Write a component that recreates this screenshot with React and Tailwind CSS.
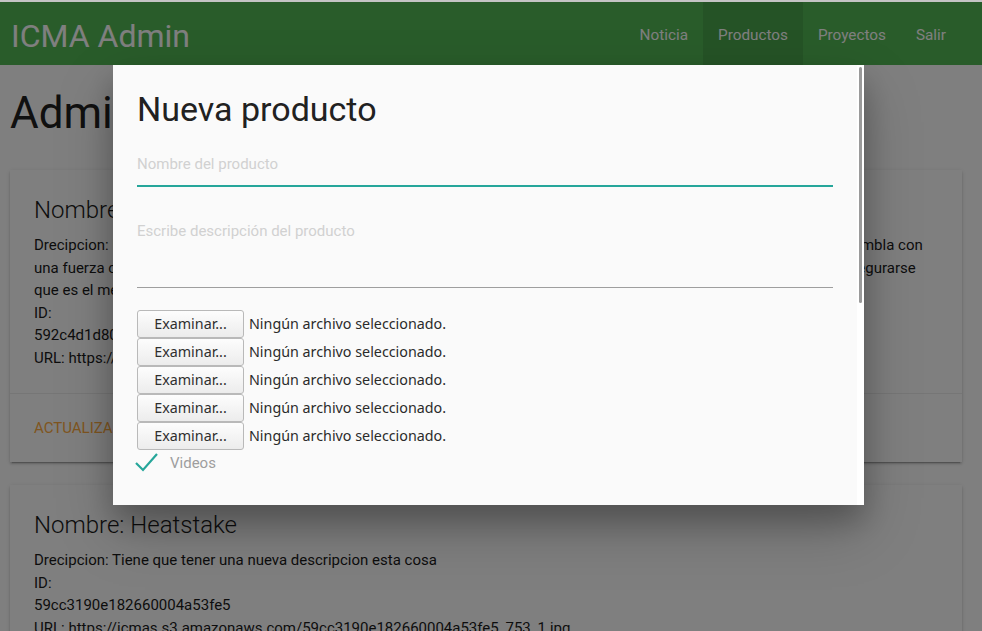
import { useState } from "react";

const productos = [
  {
    id: "592c4d1d8012345a0004b1c2",
    nombre: "Nombre: Heatstake Manual",
    lineas: [
      "Drecipcion: Máquina de inserción por calor que permite colocar insertos metálicos en piezas de plástico y que luego se ensambla con",
      "una fuerza constante y controlada, la temperatura se mantiene estable durante todo el proceso de trabajo del operador al asegurarse",
      "que es el mejor resultado posible en cada pieza.",
    ],
  },
  {
    id: "59cc3190e182660004a53fe5",
    nombre: "Nombre: Heatstake",
    lineas: ["Drecipcion: Tiene que tener una nueva descripcion esta cosa"],
  },
];

function Checkmark() {
  return (
    <svg width="24" height="20" viewBox="0 0 24 20" className="shrink-0">
      <polyline points="1,10 8,17 22,1" fill="none" stroke="#26a69a" strokeWidth="2.2" />
    </svg>
  );
}

function FileRow() {
  return (
    <div className="flex h-[28px] items-center font-['Noto_Sans',sans-serif] text-[14.3px]">
      <button className="h-[28px] w-[107px] rounded-[3px] border border-[#b9b9b9] bg-gradient-to-b from-[#fdfdfd] to-[#ececec] text-[#2f2f2f]">
        Examinar...
      </button>
      <span className="ml-[5px] text-[#2b2b2b]">Ningún archivo seleccionado.</span>
    </div>
  );
}

export default function App() {
  const [videos, setVideos] = useState(true);

  return (
    <div className="relative min-h-screen w-full bg-white font-['Roboto',sans-serif]">
      <div className="relative z-50 h-[2px] bg-[#c4c4c4]" />
      <nav className="flex h-[63px] items-center justify-between bg-[#53b955] pl-[11px] pr-[21px]">
        <span className="pt-[4px] text-[32px] leading-none text-white">ICMA Admin</span>
        <ul className="flex h-full pt-[3px] text-[15.3px] text-white">
          <li className="flex items-center px-[15px]">Noticia</li>
          <li className="-mt-[3px] flex items-center bg-black/10 px-[15px] pt-[3px]">Productos</li>
          <li className="flex items-center px-[15px]">Proyectos</li>
          <li className="flex items-center px-[15px]">Salir</li>
        </ul>
      </nav>

      <div className="ml-[10px] mr-[20px]">
        <h3 className="mt-[24px] mb-[33px] text-[44px] leading-[48px] text-[#212121]">Administrar Productos</h3>

        {productos.map((p) => (
          <div
            key={p.id}
            className="mb-[23px] bg-white shadow-[0_2px_2px_0_rgba(0,0,0,0.14),0_1px_5px_0_rgba(0,0,0,0.12),0_3px_1px_-2px_rgba(0,0,0,0.2)]"
          >
            <div className="p-[24px] text-[15px] leading-[22.5px] text-[#1a1a1a]">
              <p className="mb-[8px] text-[24px] font-light leading-[32px]">{p.nombre}</p>
              {p.lineas.map((l) => (
                <p key={l} className="whitespace-nowrap">{l}</p>
              ))}
              <p>ID:</p>
              <p>{p.id}</p>
              <p>URL: https://icmas.s3.amazonaws.com/{p.id}_753_1.jpg</p>
            </div>
            <div className="flex gap-[24px] border-t border-[rgba(160,160,160,0.2)] px-[24px] py-[23px] text-[15px] leading-[22px] text-[#ffab40]">
              <span>ACTUALIZAR</span>
              <span>ELIMINAR</span>
            </div>
          </div>
        ))}
      </div>

      <div className="fixed inset-0 z-40 bg-black/50" />

      <div className="fixed left-[113px] top-[65px] z-50 h-[440px] w-[751px] overflow-hidden bg-white shadow-[0_16px_28px_0_rgba(0,0,0,0.22),0_25px_55px_0_rgba(0,0,0,0.21)]">
        <div className="h-full w-[744px] bg-[#fafafa] px-[24px] pt-[25px]">
          <h4 className="text-[34px] leading-[38px] text-[#212121]">Nueva producto</h4>

          <div className="mt-[13px]">
            <input
              placeholder="Nombre del producto"
              className="h-[46px] w-full border-b-2 border-[#26a69a] bg-transparent pt-[2px] text-[15px] text-[#212121] outline-none placeholder:text-[#d1d1d1]"
            />
          </div>

          <div className="mt-[22px]">
            <textarea
              placeholder="Escribe descripción del producto"
              className="block h-[79px] w-full resize-none border-b border-[#9e9e9e] bg-transparent pt-[11px] text-[15px] leading-[22px] text-[#212121] outline-none placeholder:text-[#d1d1d1]"
            />
          </div>

          <div className="mt-[22px] flex flex-col">
            <FileRow />
            <FileRow />
            <FileRow />
            <FileRow />
            <FileRow />
          </div>

          <label
            className="mt-[1px] flex h-[24px] cursor-pointer items-center"
            onClick={() => setVideos(!videos)}
          >
            <span className="w-[35px] -ml-[2px]">{videos && <Checkmark />}</span>
            <span className="text-[15px] text-[#9e9e9e]">Videos</span>
          </label>
        </div>
        <div className="absolute right-[2px] top-[2px] h-[236px] w-[3px] rounded-full bg-[#9a9a9a]" />
      </div>
    </div>
  );
}
